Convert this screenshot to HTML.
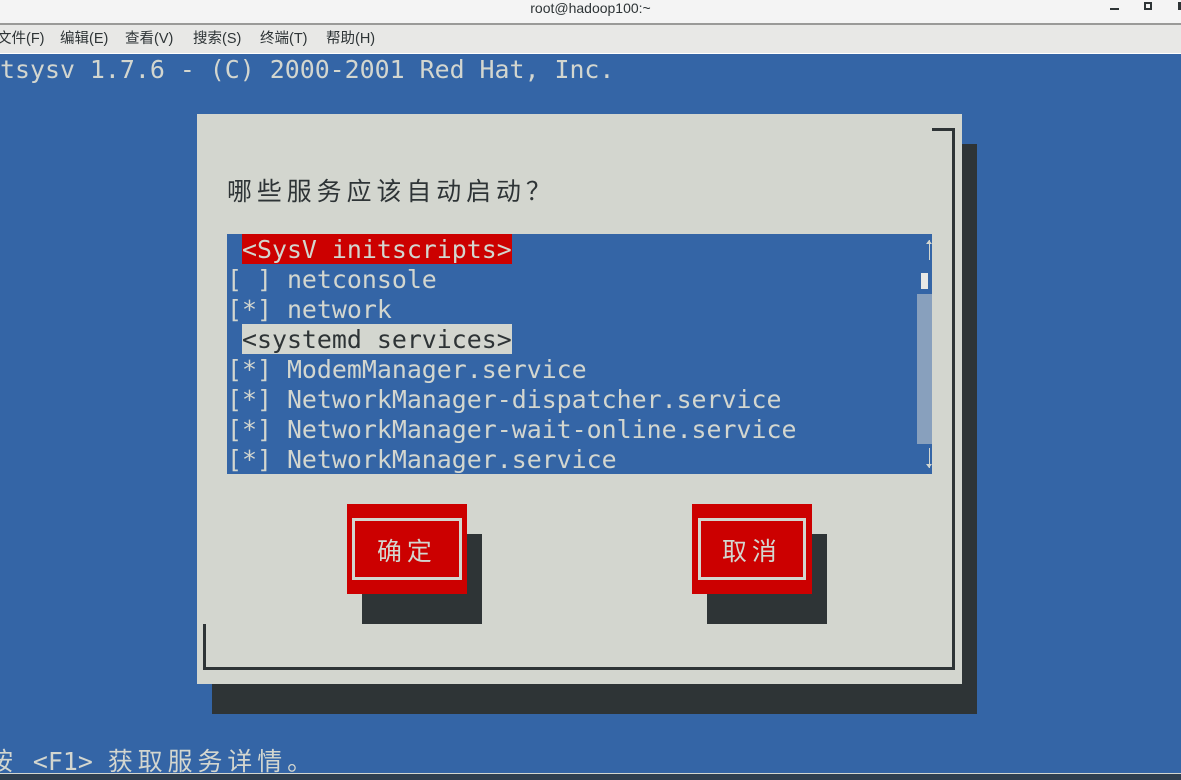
<!DOCTYPE html>
<html><head><meta charset="utf-8">
<style>
*{margin:0;padding:0;box-sizing:border-box}
body{width:1181px;height:780px;overflow:hidden;position:relative;background:#3465a6;font-family:"DejaVu Sans Mono","Liberation Mono","Noto Sans CJK SC",monospace}
.a{position:absolute}
.t{position:absolute;white-space:pre;font-size:24.9px;line-height:30px;height:30px;color:#d3d6cf}
.c{letter-spacing:5px;font-family:"Noto Sans CJK SC","WenQuanYi Zen Hei",sans-serif}
.m{position:absolute;top:29px;font:14.5px/20px 'Liberation Sans','Noto Sans CJK SC',sans-serif;color:#2e3436;white-space:pre}
</style></head><body>
<div class="a" style="left:0;top:0;width:1181px;height:24px;background:#f4f4f4"></div>
<div class="a" style="left:0;top:0;width:1181px;height:24px;text-align:center;font:14px/16px 'Liberation Sans',sans-serif;color:#2e3436">root@hadoop100:~</div>
<div class="a" style="left:1110px;top:8px;width:9px;height:2px;background:#2e3436"></div>
<div class="a" style="left:1144px;top:2px;width:8px;height:8px;border:2px solid #2e3436"></div>
<div class="a" style="left:1178px;top:2px;width:3px;height:8px;background:#2e3436"></div>
<div class="a" style="left:0;top:23px;width:1181px;height:2px;background:#9a9a98"></div>
<div class="a" style="left:0;top:25px;width:1181px;height:28px;background:#e8e8e6"></div>
<div class="m" style="left:-3px">文件(F)</div>
<div class="m" style="left:60px">编辑(E)</div>
<div class="m" style="left:125px">查看(V)</div>
<div class="m" style="left:193px">搜索(S)</div>
<div class="m" style="left:260px">终端(T)</div>
<div class="m" style="left:326px">帮助(H)</div>
<div class="a" style="left:0;top:53px;width:1181px;height:1px;background:#fff"></div>
<div class="a" style="left:0;top:773px;width:1181px;height:1px;background:#d3d6cf"></div>
<div class="a" style="left:0;top:774px;width:1181px;height:6px;background:#2f3f4f"></div>

<div class="t" style="left:0;top:55px">tsysv 1.7.6 - (C) 2000-2001 Red Hat, Inc.</div>

<div class="a" style="left:212px;top:144px;width:765px;height:570px;background:#2e3436"></div>
<div class="a" style="left:197px;top:114px;width:765px;height:570px;background:#d3d6cf"></div>
<div class="a" style="left:932px;top:128px;width:23px;height:3px;background:#2e3436"></div>
<div class="a" style="left:952px;top:128px;width:3px;height:542px;background:#2e3436"></div>
<div class="a" style="left:203px;top:667px;width:752px;height:3px;background:#2e3436"></div>
<div class="a" style="left:203px;top:624px;width:3px;height:46px;background:#2e3436"></div>

<div class="t c" style="left:227px;top:175px;color:#2e3436">哪些服务应该自动启动？</div>

<div class="a" style="left:227px;top:234px;width:705px;height:240px;background:#3465a6"></div>
<div class="a" style="left:242px;top:234px;width:270px;height:30px;background:#cc0000"></div>
<div class="a" style="left:242px;top:324px;width:270px;height:30px;background:#d3d6cf"></div>
<div class="a" style="left:917px;top:294px;width:15px;height:150px;background:#88a0bd"></div>
<div class="a" style="left:921px;top:273px;width:7px;height:16px;background:#e8e8e6"></div>
<div class="a" style="left:929px;top:240px;width:1px;height:20px;background:#d3d6cf"></div>
<div class="a" style="left:926px;top:240px;width:7px;height:4px;border-left:3px solid transparent;border-right:3px solid transparent;border-bottom:4px solid #d3d6cf;width:0;height:0;margin-left:0"></div>
<div class="a" style="left:929px;top:448px;width:1px;height:20px;background:#d3d6cf"></div>
<div class="a" style="left:926px;top:464px;width:0;height:0;border-left:3px solid transparent;border-right:3px solid transparent;border-top:4px solid #d3d6cf"></div>
<div class="t" style="left:227px;top:235px"> &lt;SysV initscripts&gt;</div>
<div class="t" style="left:227px;top:265px">[ ] netconsole</div>
<div class="t" style="left:227px;top:295px">[*] network</div>
<div class="t" style="left:227px;top:325px;color:#2e3436"> &lt;systemd services&gt;</div>
<div class="t" style="left:227px;top:355px">[*] ModemManager.service</div>
<div class="t" style="left:227px;top:385px">[*] NetworkManager-dispatcher.service</div>
<div class="t" style="left:227px;top:415px">[*] NetworkManager-wait-online.service</div>
<div class="t" style="left:227px;top:445px">[*] NetworkManager.service</div>

<div class="a" style="left:362px;top:534px;width:120px;height:90px;background:#2e3436"></div>
<div class="a" style="left:347px;top:504px;width:120px;height:90px;background:#cc0000"></div>
<div class="a" style="left:352px;top:518px;width:110px;height:62px;border:3px solid #d3d6cf"></div>
<div class="t c" style="left:377px;top:535px">确定</div>

<div class="a" style="left:707px;top:534px;width:120px;height:90px;background:#2e3436"></div>
<div class="a" style="left:692px;top:504px;width:120px;height:90px;background:#cc0000"></div>
<div class="a" style="left:698px;top:518px;width:108px;height:62px;border:3px solid #d3d6cf"></div>
<div class="t c" style="left:722px;top:535px">取消</div>

<div class="t" style="left:-12px;top:745px"><span class="c">按</span> &lt;F1&gt; <span class="c">获取服务详情。</span></div>
</body></html>
